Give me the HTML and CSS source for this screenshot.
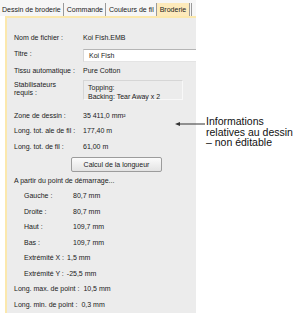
FILE: index.html
```html
<!DOCTYPE html>
<html lang="fr">
<head>
    <meta charset="UTF-8">
    <title>Broderie</title>
    <link rel="stylesheet" href="styles.css">
</head>
<body>
    <div class="dialog">
        <div class="tabs">
            <div class="tab">Dessin de broderie</div>
            <div class="tab">Commande</div>
            <div class="tab">Couleurs de fil</div>
            <div class="tab active">Broderie</div>
            <div class="tab stub"></div>
        </div>

        <div class="panel">
            <div class="row first">
                <span class="label">Nom de fichier :</span>
                <span class="value">Koi Fish.EMB</span>
            </div>
            <div class="row title-row">
                <span class="label">Titre :</span>
                <div class="input">Koi Fish</div>
            </div>
            <div class="row">
                <span class="label">Tissu automatique :</span>
                <span class="value">Pure Cotton</span>
            </div>
            <div class="row stab-row">
                <span class="label">Stabilisateurs<br>requis :</span>
                <div class="stab-box">Topping:<br>Backing: Tear Away x 2</div>
            </div>

            <div class="row metric zone">
                <span class="label">Zone de dessin :</span>
                <span class="value">35 411,0 mm²</span>
            </div>
            <div class="row metric">
                <span class="label">Long. tot. ale de fil :</span>
                <span class="value">177,40 m</span>
            </div>
            <div class="row metric">
                <span class="label">Long. tot. de fil :</span>
                <span class="value">61,00 m</span>
            </div>

            <div class="button-row">
                <button class="calc">Calcul de la longueur</button>
            </div>

            <div class="heading">A partir du point de démarrage...</div>

            <div class="line pos"><span class="label">Gauche :</span><span>80,7 mm</span></div>
            <div class="line pos"><span class="label">Droite :</span><span>80,7 mm</span></div>
            <div class="line pos"><span class="label">Haut :</span><span>109,7 mm</span></div>
            <div class="line pos"><span class="label">Bas :</span><span>109,7 mm</span></div>
            <div class="line ext"><span class="label">Extrémité X :</span><span>1,5 mm</span></div>
            <div class="line ext"><span class="label">Extrémité Y :</span><span>-25,5 mm</span></div>
            <div class="line stitch"><span class="label">Long. max. de point :</span><span>10,5 mm</span></div>
            <div class="line stitch"><span class="label">Long. min. de point :</span><span>0,3 mm</span></div>
        </div>
    </div>

    <svg class="pointer" width="32" height="8" viewBox="0 0 32 8">
        <line x1="4" y1="4" x2="31" y2="4" stroke="#333" stroke-width="1"/>
        <polygon points="1,4 6,2 6,6" fill="#333"/>
    </svg>
    <div class="note">Informations<br>relatives au dessin<br>– non éditable</div>
</body>
</html>
```

FILE: styles.css
```css
body {
    margin: 0;
    background: #ffffff;
    font-family: "Liberation Sans", Arial, sans-serif;
    position: relative;
    height: 327px;
    overflow: hidden;
}

.dialog {
    width: 196px;
    font-size: 7px;
    color: #1a1a1a;
}

.tabs {
    display: flex;
    height: 16px;
    background: #f6f6f6;
}

.tab {
    margin-top: 3px;
    padding: 0 2px 0 2px;
    line-height: 13px;
    border-right: 1px solid #9a9a9a;
    white-space: nowrap;
}

.tab + .tab {
    padding-left: 3px;
}

.tab.active {
    background: #fdeabb;
    padding: 0 3px;
}

.tab.stub {
    width: 2px;
    padding: 0;
    border-right: none;
    border-left: 1px solid #9a9a9a;
    margin-left: 1px;
}

.panel {
    margin-left: 5px;
    height: 283px;
    background: #ececec;
    border-top: 2px solid #fbe8ad;
    border-left: 2px solid #fbe8ad;
    padding-left: 7px;
    padding-top: 12px;
    overflow: hidden;
}

.row {
    display: flex;
    align-items: center;
    height: 14px;
}

.row .label {
    width: 69px;
    flex: none;
}

.row.first {
    height: 15px;
}

.title-row {
    margin-top: 4px;
    height: 13px;
    align-items: flex-start;
}

.title-row .label {
    line-height: 9px;
}

.input {
    flex: 1;
    height: 13px;
    box-sizing: border-box;
    background: #ffffff;
    border-top: 1px solid #b5b5b5;
    border-left: 1px solid #d8d8d8;
    border-bottom: 1px solid #e4e4e4;
    padding-left: 5px;
    line-height: 11px;
}

.row + .row:not(.title-row):not(.stab-row):not(.metric) {
    margin-top: 1px;
}

.stab-row {
    margin-top: 3px;
    height: 20px;
    align-items: flex-start;
}

.stab-row .label {
    line-height: 8px;
    padding-top: 1px;
}

.stab-box {
    width: 100px;
    height: 20px;
    box-sizing: border-box;
    border: 1px solid #d6d6d6;
    border-right-color: #f8f8f8;
    border-bottom-color: #f8f8f8;
    padding: 2px 0 0 4px;
    line-height: 9px;
}

.metric {
    height: 15.5px;
}

.metric.zone {
    margin-top: 7.5px;
}

.button-row {
    margin-top: 3px;
    padding-left: 57px;
}

.calc {
    display: block;
    width: 91px;
    height: 15px;
    padding: 0;
    font-family: inherit;
    font-size: 7px;
    color: #1a1a1a;
    border: 1px solid #9c9c9c;
    border-radius: 2px;
    background: linear-gradient(#fbfbfb, #e3e3e3);
}

.heading {
    margin-top: 2px;
    height: 14px;
    line-height: 14px;
}

.line {
    display: flex;
    gap: 3px;
    height: 15.5px;
    line-height: 15.5px;
    white-space: nowrap;
}

.line.pos,
.line.ext {
    padding-left: 10px;
}

.line.pos .label {
    width: 46px;
}

.line.stitch {
    gap: 4px;
}

.pointer {
    position: absolute;
    left: 174px;
    top: 120px;
}

.note {
    position: absolute;
    left: 206px;
    top: 116px;
    font-size: 10.5px;
    line-height: 10.5px;
    color: #111111;
}
```
